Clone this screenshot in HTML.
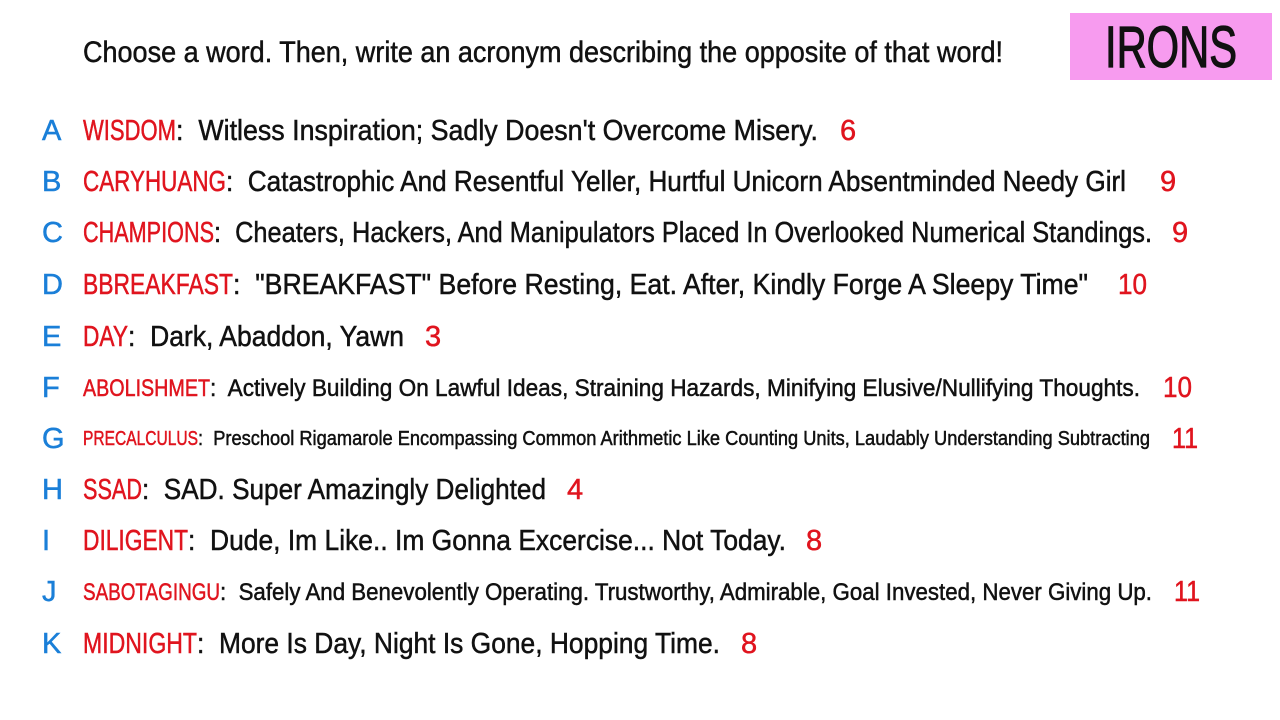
<!DOCTYPE html>
<html><head><meta charset="utf-8"><style>
html,body{margin:0;padding:0;background:#fff;width:1280px;height:720px;overflow:hidden}
svg{display:block}
text{font-family:"Liberation Sans Narrow","Liberation Sans",sans-serif;white-space:pre;stroke-width:0.5}
.r{fill:#e0141e;stroke:#e0141e}.k{fill:#111;stroke:#111}.b{fill:#1a7fd8;stroke:#1a7fd8}
</style></head><body>
<svg width="1280" height="720" viewBox="0 0 1280 720" xml:space="preserve">
<text x="83" y="62" font-size="30" class="k" textLength="920" lengthAdjust="spacingAndGlyphs">Choose a word. Then, write an acronym describing the opposite of that word!</text>
<rect x="1070" y="13" width="202" height="67" fill="#f79bef"/>
<text x="1105" y="67" font-size="58" class="k" style="stroke-width:1.2" textLength="132" lengthAdjust="spacingAndGlyphs">IRONS</text>

<g font-size="29">
<g font-size="29">
<text x="42" y="140" class="b">A</text>
<text x="42" y="191" class="b">B</text>
<text x="42" y="242" class="b">C</text>
<text x="42" y="294" class="b">D</text>
<text x="42" y="346" class="b">E</text>
<text x="42" y="397" class="b">F</text>
<text x="42" y="448" class="b">G</text>
<text x="42" y="499" class="b">H</text>
<text x="42" y="550" class="b">I</text>
<text x="42" y="601" class="b">J</text>
<text x="42" y="653" class="b">K</text>
</g>
<text x="83" y="140" class="r" textLength="93" lengthAdjust="spacingAndGlyphs">WISDOM</text>
<text x="176" y="140" class="k" textLength="642" lengthAdjust="spacingAndGlyphs">:  Witless Inspiration; Sadly Doesn't Overcome Misery.</text>
<text x="840" y="140" class="r">6</text>

<text x="83" y="191" class="r" textLength="143" lengthAdjust="spacingAndGlyphs">CARYHUANG</text>
<text x="226" y="191" class="k" textLength="900" lengthAdjust="spacingAndGlyphs">:  Catastrophic And Resentful Yeller, Hurtful Unicorn Absentminded Needy Girl</text>
<text x="1160" y="191" class="r">9</text>

<text x="83" y="242" class="r" textLength="131" lengthAdjust="spacingAndGlyphs">CHAMPIONS</text>
<text x="214" y="242" class="k" textLength="938" lengthAdjust="spacingAndGlyphs">:  Cheaters, Hackers, And Manipulators Placed In Overlooked Numerical Standings.</text>
<text x="1172" y="242" class="r">9</text>

<text x="83" y="294" class="r" textLength="150" lengthAdjust="spacingAndGlyphs">BBREAKFAST</text>
<text x="233" y="294" class="k" textLength="855" lengthAdjust="spacingAndGlyphs">:  "BREAKFAST" Before Resting, Eat. After, Kindly Forge A Sleepy Time"</text>
<text x="1118" y="294" class="r" textLength="29" lengthAdjust="spacingAndGlyphs">10</text>

<text x="83" y="346" class="r" textLength="45" lengthAdjust="spacingAndGlyphs">DAY</text>
<text x="128" y="346" class="k" textLength="276" lengthAdjust="spacingAndGlyphs">:  Dark, Abaddon, Yawn</text>
<text x="425" y="346" class="r">3</text>

<text x="83" y="396" class="r" font-size="24" textLength="127" lengthAdjust="spacingAndGlyphs">ABOLISHMET</text>
<text x="210" y="396" class="k" font-size="24" textLength="930" lengthAdjust="spacingAndGlyphs">:  Actively Building On Lawful Ideas, Straining Hazards, Minifying Elusive/Nullifying Thoughts.</text>
<text x="1163" y="397" class="r" textLength="29" lengthAdjust="spacingAndGlyphs">10</text>

<text x="83" y="445" class="r" font-size="20" textLength="115" lengthAdjust="spacingAndGlyphs">PRECALCULUS</text>
<text x="198" y="445" class="k" font-size="20" textLength="952" lengthAdjust="spacingAndGlyphs">:  Preschool Rigamarole Encompassing Common Arithmetic Like Counting Units, Laudably Understanding Subtracting</text>
<text x="1172" y="448" class="r" textLength="26" lengthAdjust="spacingAndGlyphs">11</text>

<text x="83" y="499" class="r" textLength="59" lengthAdjust="spacingAndGlyphs">SSAD</text>
<text x="142" y="499" class="k" textLength="404" lengthAdjust="spacingAndGlyphs">:  SAD. Super Amazingly Delighted</text>
<text x="567" y="499" class="r">4</text>

<text x="83" y="550" class="r" textLength="105" lengthAdjust="spacingAndGlyphs">DILIGENT</text>
<text x="188" y="550" class="k" textLength="598" lengthAdjust="spacingAndGlyphs">:  Dude, Im Like.. Im Gonna Excercise... Not Today.</text>
<text x="806" y="550" class="r">8</text>

<text x="83" y="600" class="r" font-size="24" textLength="137" lengthAdjust="spacingAndGlyphs">SABOTAGINGU</text>
<text x="220" y="600" class="k" font-size="24" textLength="932" lengthAdjust="spacingAndGlyphs">:  Safely And Benevolently Operating. Trustworthy, Admirable, Goal Invested, Never Giving Up.</text>
<text x="1174" y="601" class="r" textLength="26" lengthAdjust="spacingAndGlyphs">11</text>

<text x="83" y="653" class="r" textLength="114" lengthAdjust="spacingAndGlyphs">MIDNIGHT</text>
<text x="197" y="653" class="k" textLength="523" lengthAdjust="spacingAndGlyphs">:  More Is Day, Night Is Gone, Hopping Time.</text>
<text x="741" y="653" class="r">8</text>
</g>
</svg>
</body></html>
